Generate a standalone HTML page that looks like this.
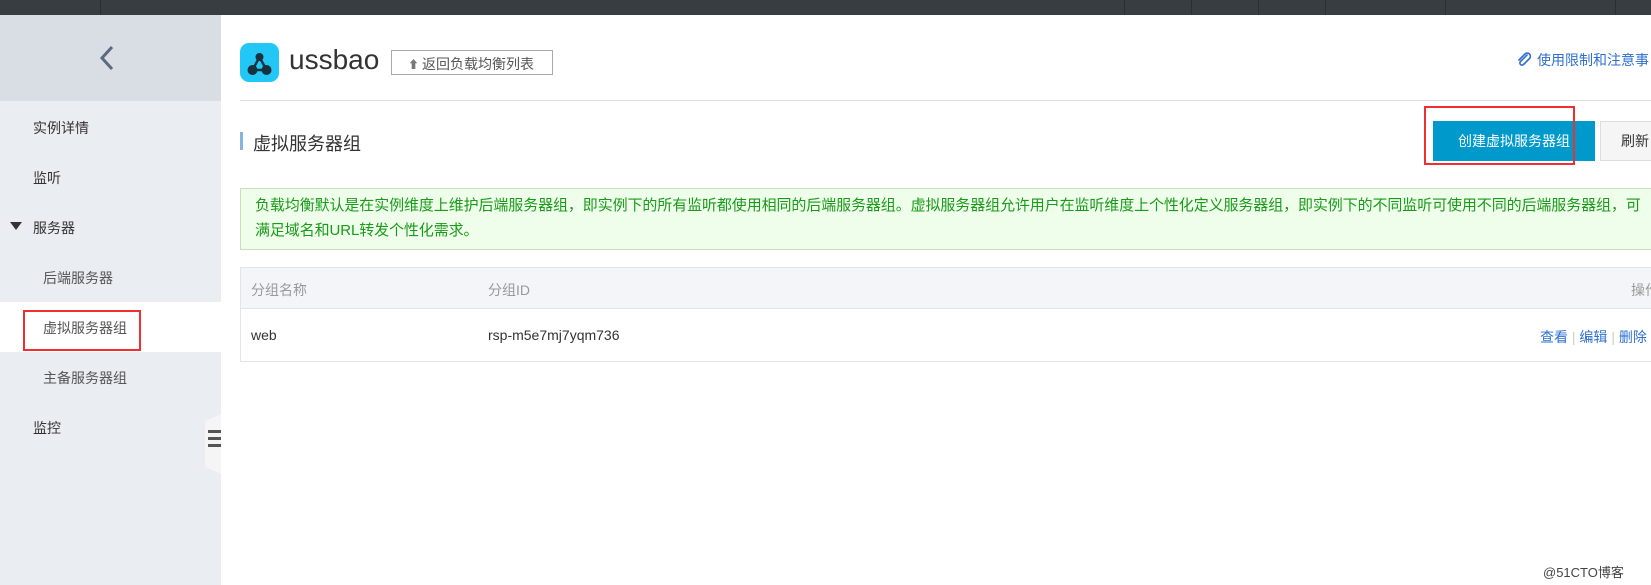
<!DOCTYPE html>
<html><head><meta charset="utf-8"><style>
*{margin:0;padding:0;box-sizing:border-box}
body{width:1651px;height:585px;overflow:hidden;background:#fff;font-family:"Liberation Sans","Noto Sans CJK SC",sans-serif;position:relative;color:#333}
.a{position:absolute;white-space:nowrap}
.top{left:0;top:0;width:1651px;height:15px;background:#373d41}
.side{left:0;top:15px;width:221px;height:570px;background:#eaedf1}
.sidetop{left:0;top:15px;width:221px;height:86px;background:#d9dde4}
.mi{font-size:14px;color:#333}
</style></head><body>
<div class="a top"></div>
<div class="a" style="left:100px;top:0;width:1px;height:15px;background:#2a2f33"></div>
<div class="a" style="left:1124px;top:0;width:1px;height:15px;background:#2a2f33"></div>
<div class="a" style="left:1191px;top:0;width:1px;height:15px;background:#2a2f33"></div>
<div class="a" style="left:1258px;top:0;width:1px;height:15px;background:#2a2f33"></div>
<div class="a" style="left:1325px;top:0;width:1px;height:15px;background:#2a2f33"></div>
<div class="a" style="left:1445px;top:0;width:1px;height:15px;background:#2a2f33"></div>
<div class="a" style="left:1615px;top:0;width:1px;height:15px;background:#2a2f33"></div>
<div class="a side"></div>
<div class="a sidetop"></div>
<svg class="a" style="left:98px;top:44px" width="18" height="28"><path d="M14 3 L4 14 L14 25" stroke="#5a6a80" stroke-width="3" fill="none"/></svg>
<div class="a mi" style="left:33px;top:118px">实例详情</div>
<div class="a mi" style="left:33px;top:168px">监听</div>
<svg class="a" style="left:10px;top:221px" width="12" height="10"><path d="M0 1 L12 1 L6 9 Z" fill="#333"/></svg>
<div class="a mi" style="left:33px;top:218px">服务器</div>
<div class="a mi" style="left:43px;top:268px;color:#555">后端服务器</div>
<div class="a" style="left:0;top:302px;width:221px;height:50px;background:#fff"></div>
<div class="a mi" style="left:43px;top:318px;color:#555">虚拟服务器组</div>
<div class="a" style="left:23px;top:310px;width:118px;height:41px;border:2px solid #f03030"></div>
<div class="a mi" style="left:43px;top:368px;color:#555">主备服务器组</div>
<div class="a mi" style="left:33px;top:418px">监控</div>
<div class="a" style="left:205px;top:414px;width:16px;height:60px;background:#f5f5f6;clip-path:polygon(100% 0,100% 100%,0 88%,0 12%)"></div>
<div class="a" style="left:208px;top:430px;width:13px;height:3px;background:#555"></div>
<div class="a" style="left:208px;top:437px;width:13px;height:3px;background:#555"></div>
<div class="a" style="left:208px;top:444px;width:13px;height:3px;background:#555"></div>

<div class="a" style="left:240px;top:43px;width:39px;height:39px;border-radius:9px;background:#22c7f5"></div>
<svg class="a" style="left:240px;top:43px" width="39" height="39"><path d="M19.5 14 L12.5 27 L26.5 27 Z" stroke="#17313f" stroke-width="2.5" fill="none"/><circle cx="19.5" cy="14" r="4" fill="#17313f"/><circle cx="12.5" cy="27" r="5" fill="#17313f"/><circle cx="26.5" cy="27" r="5" fill="#17313f"/></svg>
<div class="a" style="left:289px;top:44px;font-size:28px;color:#333">ussbao</div>
<div class="a" style="left:391px;top:50px;width:162px;height:25px;border:1px solid #aaa;font-size:14px;color:#555;padding:3px 0 0 30px">返回负载均衡列表</div>
<div class="a" style="left:408px;top:56px;font-size:11px;color:#777">⬆</div>
<svg class="a" style="left:1516px;top:51px" width="16" height="16"><path d="M11 4 L4.5 10.5 A2 2 0 0 0 7.5 13.5 L13.5 7.5 A3 3 0 0 0 9 3 L3 9" stroke="#2f6fcf" stroke-width="1.6" fill="none" stroke-linecap="round"/></svg>
<div class="a" style="left:1537px;top:50px;font-size:14px;color:#2f6fcf">使用限制和注意事</div>
<div class="a" style="left:240px;top:100px;width:1411px;height:1px;background:#ddd"></div>
<div class="a" style="left:240px;top:132px;width:3px;height:18px;background:#88b4e0"></div>
<div class="a" style="left:253px;top:130px;font-size:18px;color:#333">虚拟服务器组</div>
<div class="a" style="left:1433px;top:121px;width:162px;height:40px;background:#0099cc;color:#fff;font-size:14px;text-align:center;line-height:40px">创建虚拟服务器组</div>
<div class="a" style="left:1424px;top:106px;width:151px;height:59px;border:2px solid #f03030"></div>
<div class="a" style="left:1600px;top:121px;width:60px;height:40px;background:#f5f5f5;border:1px solid #ddd;font-size:14px;line-height:38px;padding-left:20px">刷新</div>

<div class="a" style="left:240px;top:188px;width:1420px;height:62px;background:#effeea;border:1px solid #c6e2b6"></div>
<div class="a" style="left:255px;top:193px;font-size:15px;color:#1a9a1a;line-height:25px;letter-spacing:-0.1px">负载均衡默认是在实例维度上维护后端服务器组，即实例下的所有监听都使用相同的后端服务器组。虚拟服务器组允许用户在监听维度上个性化定义服务器组，即实例下的不同监听可使用不同的后端服务器组，可<br>满足域名和URL转发个性化需求。</div>

<div class="a" style="left:240px;top:267px;width:1420px;height:95px;border:1px solid #e2e4e8"></div>
<div class="a" style="left:241px;top:268px;width:1420px;height:41px;background:#f4f5f8;border-bottom:1px solid #dfe2e8"></div>
<div class="a" style="left:251px;top:280px;font-size:14px;color:#999">分组名称</div>
<div class="a" style="left:488px;top:280px;font-size:14px;color:#999">分组ID</div>
<div class="a" style="left:1631px;top:280px;font-size:14px;color:#999">操作</div>
<div class="a" style="left:251px;top:327px;font-size:14px;color:#333">web</div>
<div class="a" style="left:488px;top:327px;font-size:14px;color:#333">rsp-m5e7mj7yqm736</div>
<div class="a" style="left:1540px;top:327px;font-size:14px;color:#2f6fcf">查看 <span style="color:#ccc">|</span> 编辑 <span style="color:#ccc">|</span> 删除</div>
<div class="a" style="left:1543px;top:562px;font-size:13px;color:#444">@51CTO博客</div>
</body></html>
